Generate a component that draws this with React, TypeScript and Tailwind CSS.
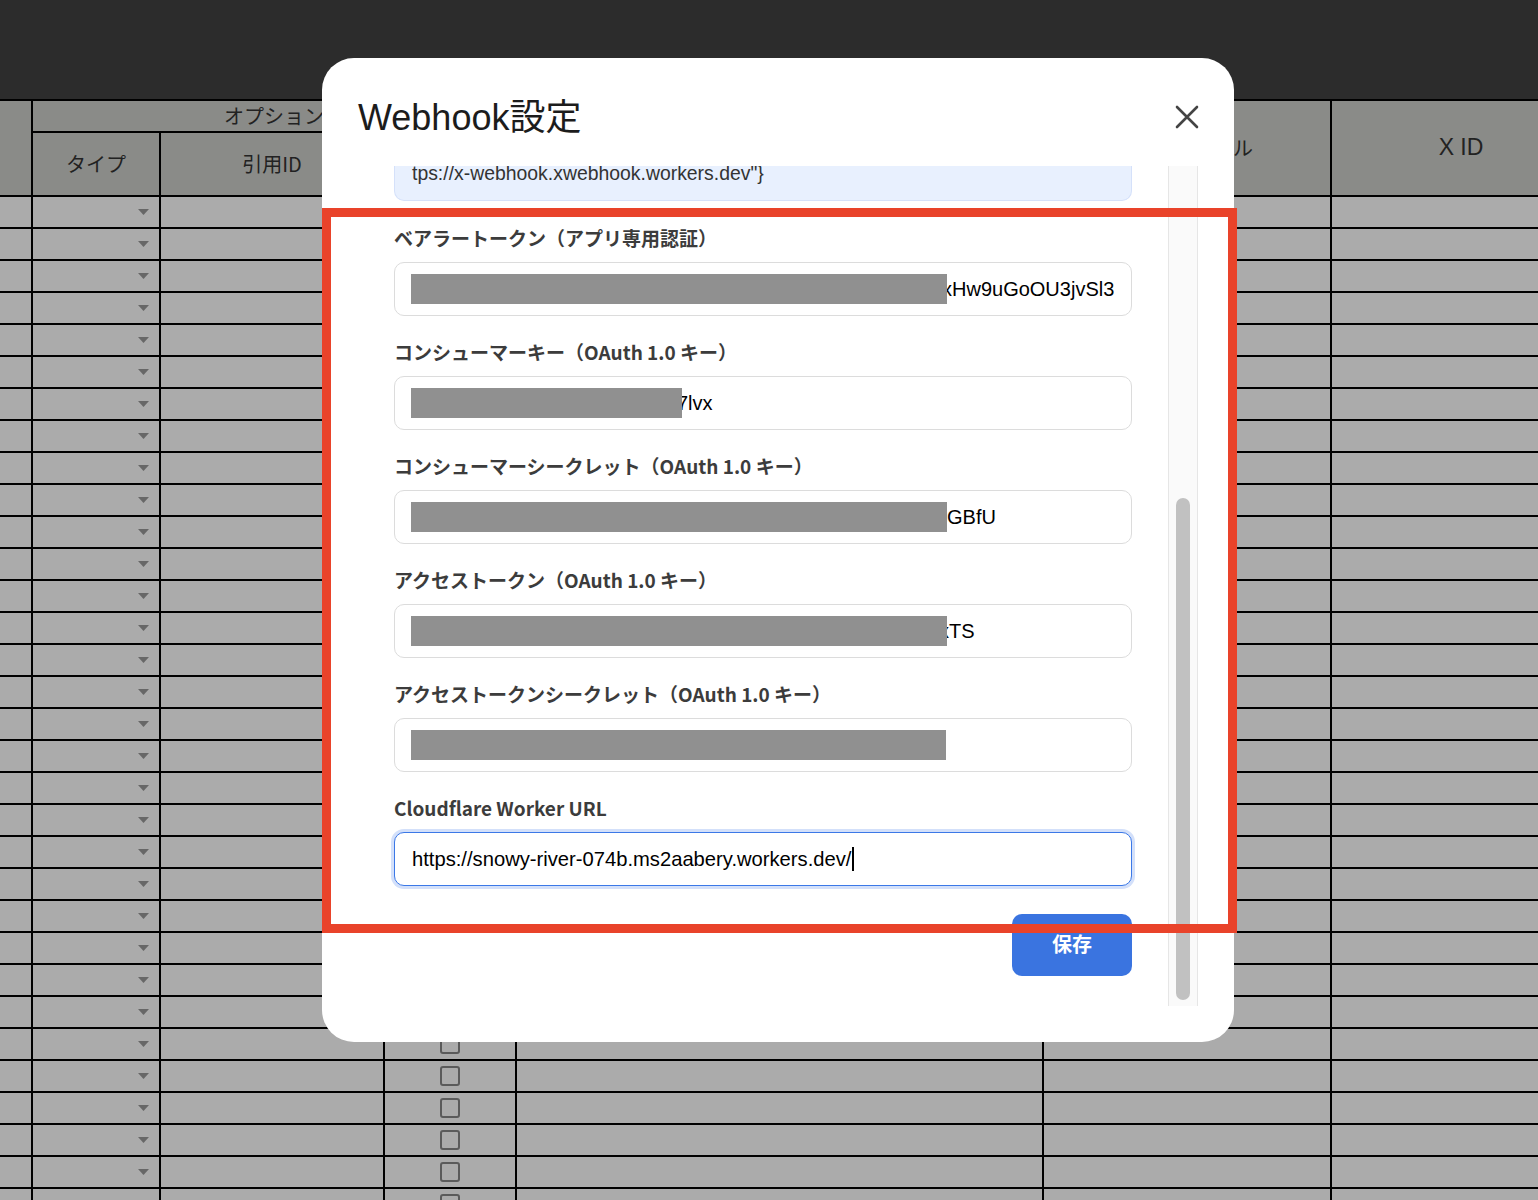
import React from "react";

const JP = { fontFamily: '"Noto Sans CJK JP", "Noto Sans", sans-serif' };
const LAT = { fontFamily: '"Liberation Sans", Arial, "Noto Sans CJK JP", sans-serif' };

function Triangle() {
  return (
    <svg width="11" height="6" viewBox="0 0 11 6">
      <polygon points="0,0 11,0 5.5,6" fill="#676767" />
    </svg>
  );
}

function Checkbox() {
  return <div className="h-[20px] w-[20px] rounded-[3px] border-2 border-[#5b5b5b]" />;
}

function Label({ children, first }: { children: React.ReactNode; first?: boolean }) {
  return (
    <div
      className={`${first ? "mt-[25px]" : "mt-[24px]"} mb-[12px] h-[24px] text-[19px] font-semibold leading-[24px] text-[#3c3c3c] whitespace-nowrap`}
      style={JP}
    >
      {children}
    </div>
  );
}

function SecretField({ bar, tail, shift }: { bar: number; tail?: string; shift?: string }) {
  return (
    <div className="flex h-[54px] w-full items-center rounded-[10px] border border-[#dcdcdc] bg-white pl-[16px] pr-[17px]">
      <div className="flex h-full flex-1 items-center overflow-hidden">
        <div className="relative z-10 h-[30px] shrink-0 bg-[#909090]" style={{ width: bar }} />
        {tail ? (
          <span className={`whitespace-nowrap text-[20px] text-black ${shift ?? ""}`} style={LAT}>
            {tail}
          </span>
        ) : null}
      </div>
    </div>
  );
}

export default function App() {
  const dataRows = Array.from({ length: 32 });
  const headerCell = "bg-[#8a8b88] flex items-center justify-center text-[20px] text-[#222] whitespace-nowrap";
  return (
    <div className="relative h-[1200px] w-[1538px] overflow-hidden bg-[#2c2c2c]" style={JP}>
      <div className="h-[99px]" />
      <div className="grid w-[1600px] grid-cols-[31px_126px_222px_130px_525px_286px_274px] grid-rows-[30px_62px] auto-rows-[30px] gap-[2px] bg-black pt-[2px]">
        <div className={`${headerCell} row-span-2`} />
        <div className={`${headerCell} col-span-3`}>オプション</div>
        <div className={`${headerCell} row-span-2`}>本文</div>
        <div className={`${headerCell} row-span-2 pl-[12px]`}>画像ファイル</div>
        <div className={`${headerCell} row-span-2 pr-[16px] pb-[2px] text-[23px]`} style={LAT}>
          X ID
        </div>
        <div className={headerCell}>タイプ</div>
        <div className={headerCell}>引用ID</div>
        <div className={headerCell}>予約</div>
        {dataRows.map((_, i) => (
          <React.Fragment key={i}>
            <div className="bg-[#ababab]" />
            <div className="flex items-center justify-end bg-[#ababab] pr-[10px]">
              <Triangle />
            </div>
            <div className="bg-[#ababab]" />
            <div className="flex items-center justify-center bg-[#ababab]">
              <Checkbox />
            </div>
            <div className="bg-[#ababab]" />
            <div className="bg-[#ababab]" />
            <div className="bg-[#ababab]" />
          </React.Fragment>
        ))}
      </div>

      {/* Dialog */}
      <div className="absolute left-[322px] top-[58px] flex h-[984px] w-[912px] flex-col rounded-[32px] bg-white px-[36px]">
        <div className="flex h-[108px] shrink-0 items-center justify-between pt-[10px]">
          <div className="mt-[2px] text-[36px] leading-[44px] text-[#1c1c1c]" style={LAT}>
            Webhook設定
          </div>
          <svg width="24" height="24" viewBox="0 0 24 24" className="mr-[-1px]">
            <path d="M2 2 L22 22 M22 2 L2 22" stroke="#444" strokeWidth="2.6" strokeLinecap="round" />
          </svg>
        </div>
        <div className="flex h-[840px] shrink-0">
          <div className="flex flex-1 flex-col overflow-hidden px-[36px]">
            <div className="h-[35px] w-full shrink-0 overflow-hidden rounded-b-[10px] border-x border-b border-[#d5e1fa] bg-[#e8f0fe] px-[17px]">
              <div className="mt-[-4px] whitespace-nowrap text-[19.4px] leading-[22px] text-[#333]" style={LAT}>
                tps://x-webhook.xwebhook.workers.dev"{"}"}
              </div>
            </div>

            <Label first>ベアラートークン（アプリ専用認証）</Label>
            <SecretField bar={536} tail="xHw9uGoOU3jvSl3kd8Qm2pLzR" shift="-ml-[5px]" />

            <Label>コンシューマーキー（OAuth 1.0 キー）</Label>
            <SecretField bar={271} tail="7lvx" shift="-ml-[5px]" />

            <Label>コンシューマーシークレット（OAuth 1.0 キー）</Label>
            <SecretField bar={536} tail="GBfU" />

            <Label>アクセストークン（OAuth 1.0 キー）</Label>
            <SecretField bar={536} tail="xTS" shift="-ml-[8px]" />

            <Label>アクセストークンシークレット（OAuth 1.0 キー）</Label>
            <SecretField bar={535} />

            <Label>Cloudflare Worker URL</Label>
            <div className="flex h-[54px] w-full items-center rounded-[10px] border border-[#3b78e7] bg-white px-[17px] shadow-[0_0_0_3px_#d3e0fa]">
              <span className="whitespace-nowrap text-[20.2px] text-black" style={LAT}>
                https://snowy-river-074b.ms2aabery.workers.dev/
              </span>
              <span className="ml-[1px] h-[24px] w-[1.5px] bg-black" />
            </div>

            <div className="mt-[28px] flex justify-end">
              <div className="flex h-[62px] w-[120px] items-center justify-center rounded-[10px] bg-[#3a74e0] pb-[2px] text-[20px] font-bold text-white" style={JP}>
                保存
              </div>
            </div>
          </div>
          {/* Scrollbar */}
          <div className="flex h-[840px] w-[30px] shrink-0 flex-col border-x border-[#e6e6e6] bg-[#fafafa] px-[7px] pb-[6px] pt-[332px]">
            <div className="flex-1 rounded-full bg-[#c1c1c1]" />
          </div>
        </div>
      </div>

      {/* Annotation box */}
      <div className="pointer-events-none absolute left-[322px] top-[208px] h-[725px] w-[915px] border-[9px] border-[#e9432a]" />
    </div>
  );
}
